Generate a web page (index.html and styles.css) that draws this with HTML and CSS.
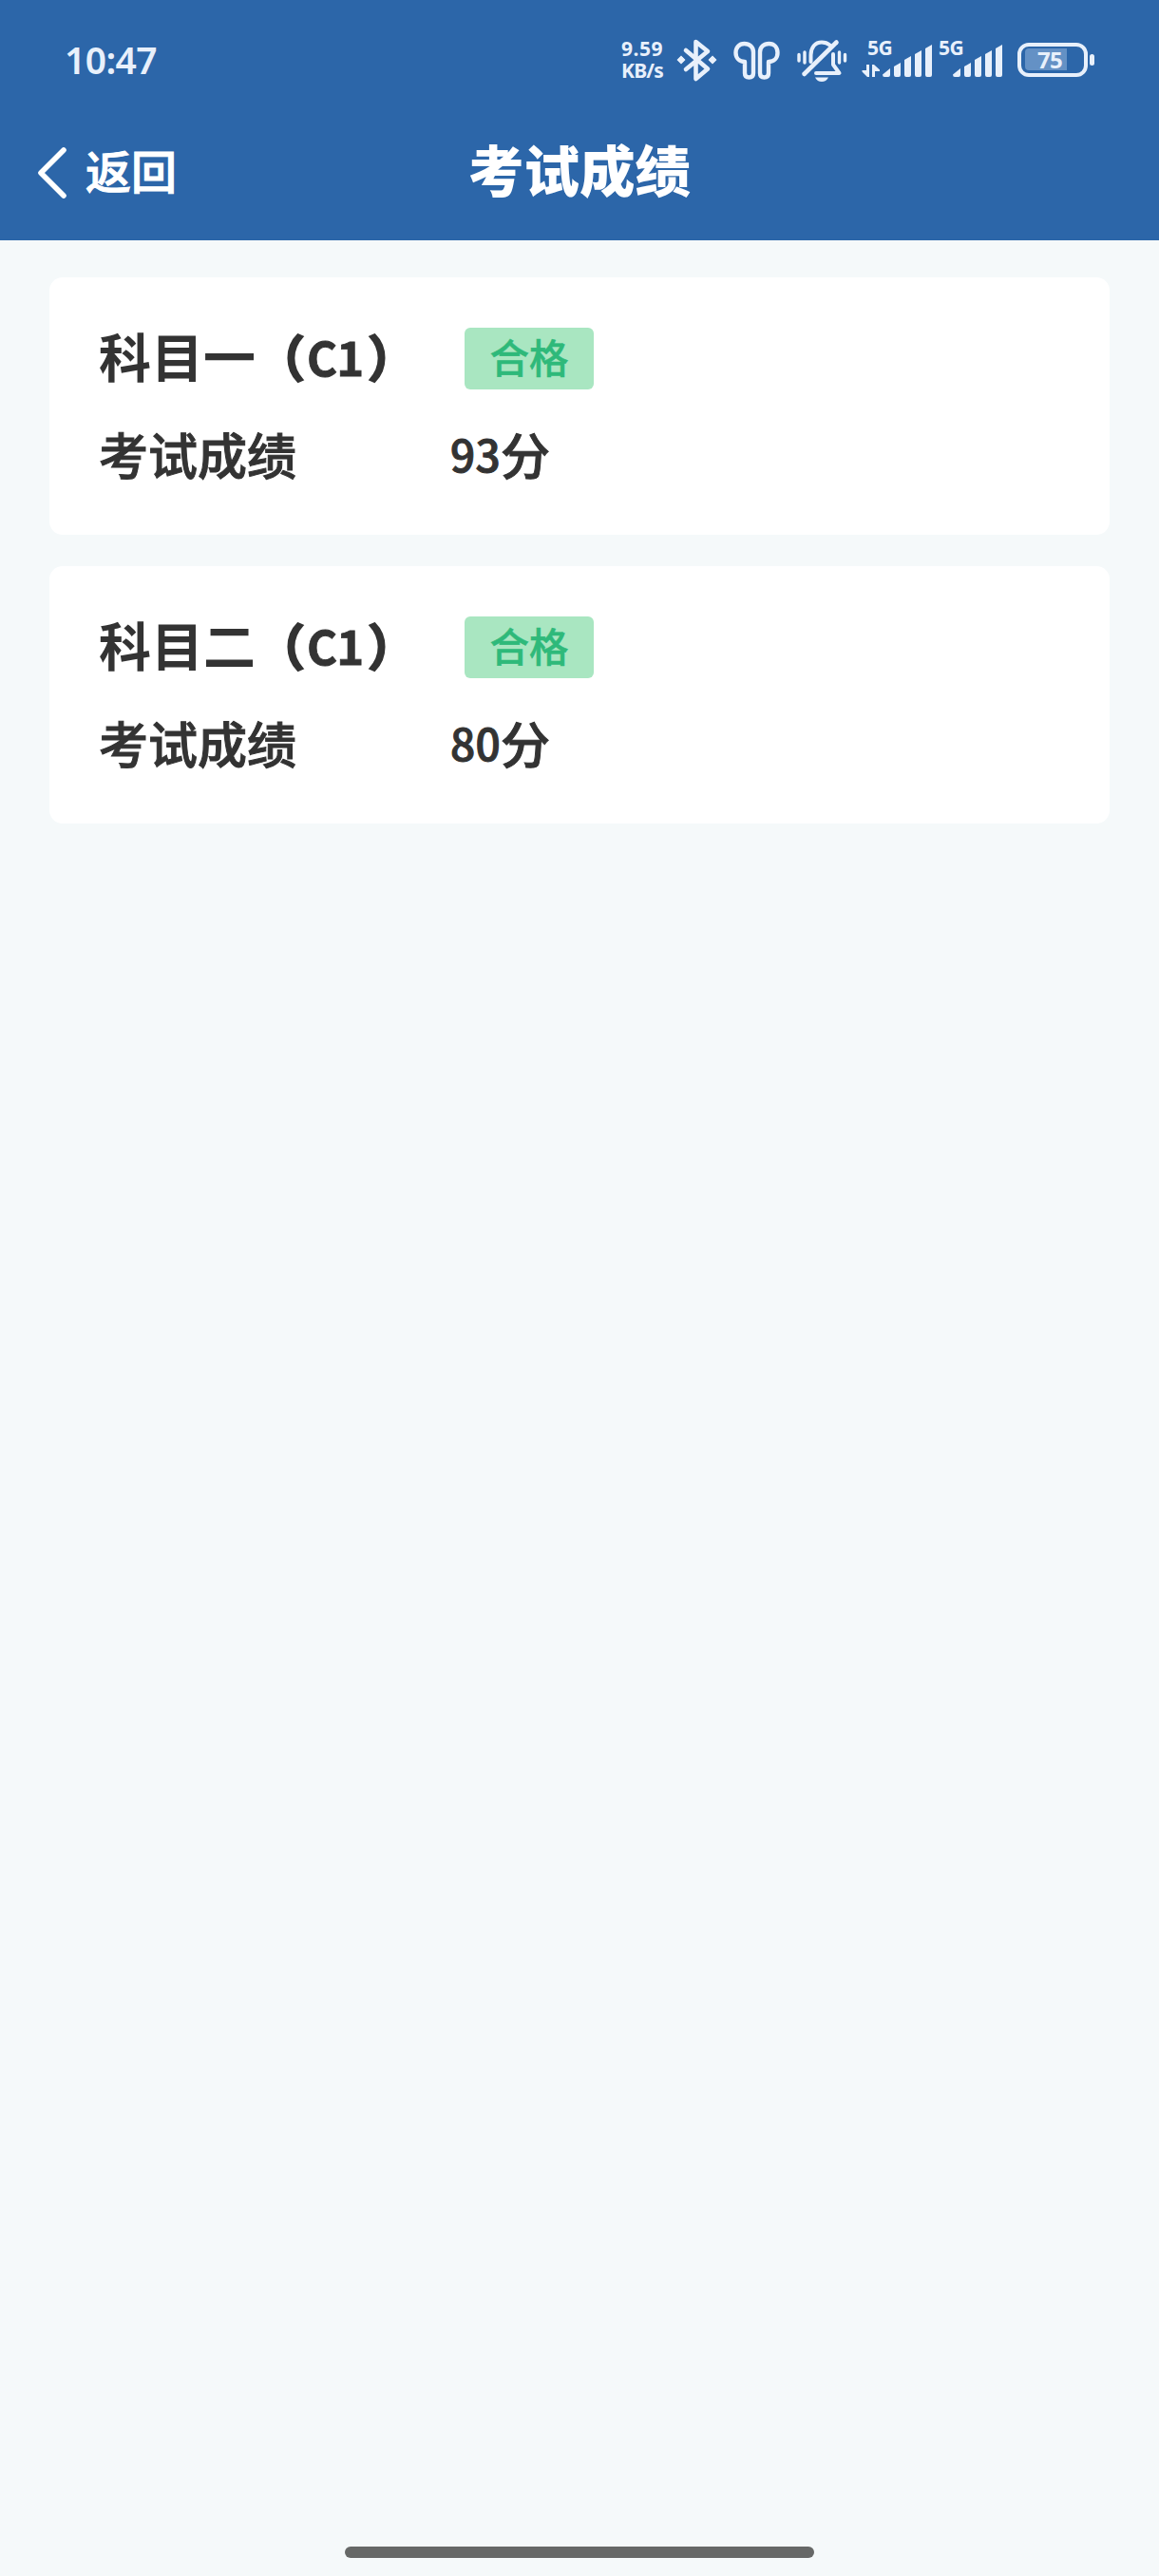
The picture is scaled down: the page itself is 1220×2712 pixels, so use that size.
FILE: index.html
```html
<!DOCTYPE html>
<html lang="zh-CN">
<head>
<meta charset="utf-8">
<title>考试成绩</title>
<link rel="stylesheet" href="styles.css">
</head>
<body>
<header class="header">
  <div class="status">
    <span class="time">10:47</span>
    <div class="indicators">
      <div class="speed"><span class="rate">9.59</span><span class="unit">KB/s</span></div>
      <svg class="bluetooth" width="44" height="48" viewBox="0 0 44 48" fill="none" stroke="currentColor" stroke-width="4.6" stroke-linecap="round" stroke-linejoin="round">
        <path d="M10 13 33 32.500 20.500 43V4L33 14 10 33"/>
        <path d="M5 18.500 9.500 23 5 27.500.500 23ZM38 18.500 42.500 23 38 27.500 33.500 23Z" fill="currentColor" stroke="none"/>
        <path d="M5 21 7 23 5 25 3 23ZM38 21 40 23 38 25 36 23Z" stroke-width="3"/>
      </svg>
      <svg class="earbuds" width="50" height="48" viewBox="0 0 50 48" fill="none" stroke="currentColor" stroke-width="4.400" stroke-linejoin="round">
        <path d="M11.500 6C6 6 2.500 10 2.500 15.500S6 25 12 25V37Q12 41.500 16.500 41.500T21 37V15C21 9.500 17 6 11.500 6Z"/>
        <path d="M37.500 6C43 6 46.500 10 46.500 15.500S43 25 37 25V37Q37 41.500 32.500 41.500T28 37V15C28 9.500 32 6 37.500 6Z"/>
      </svg>
      <svg class="mute" width="53" height="48" viewBox="0 0 53 48" fill="none" stroke="currentColor" stroke-width="4" stroke-linecap="round" stroke-linejoin="round">
        <path d="M14.500 25V18C14.500 10 19 4.500 26 4.500Q31 4.500 34.500 7.500"/>
        <path d="M38 17V28L44.500 37H20"/>
        <path d="M7.500 38 41.500 4.500" stroke-width="4.600"/>
        <path d="M19 41.500H33C31.500 44.500 29 46 26 46S20.500 44.500 19 41.500Z" fill="currentColor" stroke="none"/>
        <path d="M2 17.500V24M8 15V26M44.500 15V26M50.500 17.500V24" stroke-width="3.400"/>
      </svg>
      <div class="signal">
        <span class="network">5G</span>
        <svg width="75" height="48" viewBox="0 0 75 48" fill="currentColor">
          <path d="M5 28H8V41H6L.500 35.500V34H5ZM11 28H13L19 33.500V35H14V41H11Z"/>
          <path d="M22 38.500 30 32V39Q30 41 28 41H24Q22 41 22 38.500ZM34 30 41 26V39Q41 41 39 41H36Q34 41 34 39ZM45 23 52 19V39Q52 41 50 41H47Q45 41 45 39ZM56 17 63 13V39Q63 41 61 41H58Q56 41 56 39ZM67 11 74 7V39Q74 41 72 41H69Q67 41 67 39Z"/>
        </svg>
      </div>
      <div class="signal second">
        <span class="network">5G</span>
        <svg width="68" height="48" viewBox="0 0 68 48" fill="currentColor">
          <path d="M15 38.500 23 32V39Q23 41 21 41H17Q15 41 15 38.500ZM27 30 34 26V39Q34 41 32 41H29Q27 41 27 39ZM38 23 45 19V39Q45 41 43 41H40Q38 41 38 39ZM49 17 56 13V39Q56 41 54 41H51Q49 41 49 39ZM60 11 67 7V39Q67 41 65 41H62Q60 41 60 39Z"/>
        </svg>
      </div>
      <div class="battery"><div class="cell"><div class="charge"></div><span class="percent">75</span></div><div class="nub"></div></div>
    </div>
  </div>
  <nav class="nav">
    <a class="back">
      <svg width="32" height="56" viewBox="0 0 32 56" fill="none" stroke="currentColor" stroke-width="5.600" stroke-linecap="round" stroke-linejoin="round"><path d="M28 4 4 28 28 52"/></svg>
      <span>返回</span>
    </a>
    <h1 class="title">考试成绩</h1>
  </nav>
</header>
<main class="results">
  <section class="card">
    <div class="subject"><h2 class="name">科目一<span class="paren">（</span><span class="class">C1</span><span class="paren">）</span></h2><span class="badge">合格</span></div>
    <div class="score"><span class="label">考试成绩</span><span class="value"><span class="digits">93</span>分</span></div>
  </section>
  <section class="card">
    <div class="subject"><h2 class="name">科目二<span class="paren">（</span><span class="class">C1</span><span class="paren">）</span></h2><span class="badge">合格</span></div>
    <div class="score"><span class="label">考试成绩</span><span class="value"><span class="digits">80</span>分</span></div>
  </section>
</main>
<div class="home-bar"></div>
</body>
</html>
```
FILE: styles.css
```css
* { box-sizing: border-box; }
body {
  margin: 0;
  height: 2712px;
  display: flex;
  flex-direction: column;
  align-items: center;
  background: #f5f9fa;
  color: #333;
  font-family: "Noto Sans CJK SC", sans-serif;
  overflow: hidden;
}
svg { display: block; flex: none; }
.header { width: 100%; height: 253px; background: #2c66a9; color: #fff; }
.status {
  height: 110px;
  padding: 40px 68px 0;
  display: flex;
  justify-content: space-between;
  color: #e8f0fb;
  font-family: "Noto Sans", sans-serif;
}
.time { font-size: 39px; line-height: 45px; font-weight: 600; letter-spacing: -0.6px; }
.indicators { display: flex; height: 48px; }
.speed { width: 46px; margin-right: 12px; font-size: 21px; font-weight: 700; line-height: 23px; white-space: nowrap; }
.speed span { display: block; }
.rate { letter-spacing: 0.5px; }
.unit { letter-spacing: -0.8px; }
.bluetooth { margin-right: 16px; }
.earbuds { margin-right: 17px; }
.mute { margin-right: 15px; }
.signal { position: relative; margin-right: 6px; }
.signal.second { margin-right: 15px; }
.network { position: absolute; left: 6px; top: -1px; font-size: 21px; line-height: 22px; font-weight: 700; letter-spacing: -0.5px; }
.second .network { left: 0; }
.battery { display: flex; align-items: center; height: 36px; margin-top: 5px; gap: 2px; }
.cell { position: relative; width: 74px; height: 36px; border: 4px solid; border-radius: 12px; padding: 2px 4px; }
.charge { width: 44px; height: 23px; border-radius: 4px 0 0 4px; background: #6491c5; }
.percent { position: absolute; inset: 0; padding-right: 6px; text-align: center; font-size: 24px; line-height: 28px; font-weight: 700; letter-spacing: -0.8px; }
.nub { width: 5px; height: 12px; border-radius: 3px; background: currentColor; }
.nav { height: 143px; padding: 0 39px; display: grid; grid-template-columns: 1fr auto 1fr; align-items: center; }
.back { display: flex; align-items: center; gap: 19px; font-size: 48px; line-height: 70px; font-weight: 500; -webkit-text-stroke: 1px; }
.back span { margin-top: -8px; }
.title { margin: -10px 0 0; font-size: 58.500px; line-height: 84px; font-weight: 900; }
.results { width: 1116px; margin-top: 39px; display: flex; flex-direction: column; gap: 33px; }
.card { height: 271px; padding: 53px 52px 0; border-radius: 14px; background: #fff; }
.subject { display: flex; align-items: center; height: 65px; }
.name { display: flex; width: 385px; margin: -7px 0 0; font-size: 55px; line-height: 65px; font-weight: 700; white-space: nowrap; }
.paren { font-size: 52px; line-height: 67px; -webkit-text-stroke: 2px; }
.class { width: 66px; padding-left: 2px; font-size: 49px; line-height: 67px; letter-spacing: -1px; -webkit-text-stroke: 0.8px; }
.badge { width: 136px; height: 65px; border-radius: 6px; background: #a9e6c1; color: #2eb97a; font-size: 41.500px; line-height: 61px; font-weight: 500; text-align: center; -webkit-text-stroke: 0.5px; }
.score { margin-top: 28px; display: flex; font-size: 52px; line-height: 80px; font-weight: 500; -webkit-text-stroke: 1px; }
.label { width: 370px; }
.value { display: flex; }
.digits { font-size: 46px; line-height: 78px; letter-spacing: 0.3px; }
.home-bar { width: 494px; height: 12px; margin: auto 0 19px; border-radius: 6px; background: #666867; }
```
